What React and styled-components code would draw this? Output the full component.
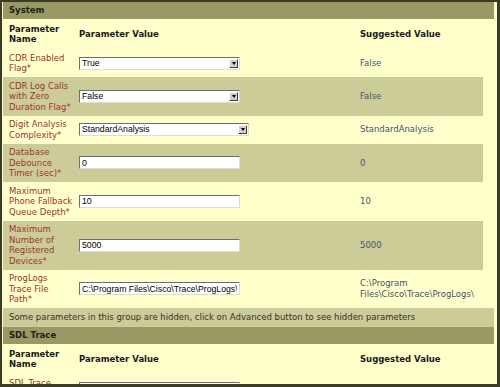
import styled, { createGlobalStyle } from 'styled-components';

const GlobalStyle = createGlobalStyle`
  html, body {
    margin: 0;
    padding: 0;
    background: #ffffcc;
  }
`;

const Frame = styled.div`
  width: 500px;
  height: 387px;
  box-sizing: border-box;
  border: solid #3b3b26;
  border-width: 2px 3px 3px 2px;
  padding: 0 3px 0 1px;
  background: #ffffcc;
  overflow: hidden;
  font-family: "DejaVu Sans", Verdana, sans-serif;
  font-size: 8.5px;
  line-height: 10.5px;
  color: #222;
`;

const SectionHeader = styled.div`
  height: 17px;
  display: flex;
  align-items: center;
  padding-left: 6px;
  background: #999966;
  font-weight: bold;
  color: #1e1e14;
`;

const ParamTable = styled.div`
  margin-right: 11px;
`;

const Row = styled.div`
  display: grid;
  grid-template-columns: 73px 281px 1fr;
  align-items: center;
  background: ${p => (p.$shade ? '#cccc99' : 'transparent')};
`;

const LabelCell = styled.div`
  padding: 3.5px 2px 3.5px 6px;
  color: #9c3434;
  white-space: nowrap;
`;

const LabelLine = styled.div``;

const Cell = styled.div`
  padding: 0 3px;
  display: flex;
  align-items: center;
`;

const HeadRow = styled(Row)`
  font-weight: bold;
  color: #1a1a1a;
  ${LabelCell} {
    color: #1a1a1a;
    padding-top: 4.5px;
    padding-bottom: 4.5px;
  }
`;

const Suggested = styled(Cell)`
  color: #44556a;
  display: block;
`;

const TextBox = styled.input`
  width: ${p => p.$w || 161}px;
  height: 13px;
  box-sizing: border-box;
  margin: 0;
  padding: 0 2px;
  border: 1px solid;
  border-color: #6e6e6e #dcdcdc #dcdcdc #6e6e6e;
  background: #fff;
  font-family: "Liberation Sans", Arial, sans-serif;
  font-size: 8.7px;
  color: #000;
  outline: none;
`;

const SelectBox = styled.div`
  width: ${p => p.$w || 161}px;
  height: 13px;
  box-sizing: border-box;
  display: flex;
  align-items: center;
  border: 1px solid;
  border-color: #6e6e6e #dcdcdc #dcdcdc #6e6e6e;
  background: #fff;
  padding: 0 1px 0 2px;
  font-family: "Liberation Sans", Arial, sans-serif;
  font-size: 8.7px;
  color: #000;
`;

const SelectValue = styled.span`
  flex: 1;
`;

const DropButton = styled.span`
  width: 9px;
  height: 9px;
  box-sizing: border-box;
  background: #d4d0c8;
  border: 1px solid;
  border-color: #fff #404040 #404040 #fff;
  display: flex;
  align-items: center;
  justify-content: center;
  &::after {
    content: '';
    border-left: 2.5px solid transparent;
    border-right: 2.5px solid transparent;
    border-top: 3px solid #000;
  }
`;

const InfoRow = styled.div`
  height: 19px;
  display: flex;
  align-items: center;
  padding-left: 6px;
  background: #cccc99;
  color: #333326;
`;

const systemParams = [
  { label: ['CDR Enabled', 'Flag*'], kind: 'select', value: 'True', suggested: 'False' },
  { label: ['CDR Log Calls', 'with Zero', 'Duration Flag*'], kind: 'select', value: 'False', suggested: 'False' },
  { label: ['Digit Analysis', 'Complexity*'], kind: 'select', value: 'StandardAnalysis', suggested: 'StandardAnalysis', width: 170 },
  { label: ['Database', 'Debounce', 'Timer (sec)*'], value: '0', suggested: '0' },
  { label: ['Maximum', 'Phone Fallback', 'Queue Depth*'], value: '10', suggested: '10' },
  { label: ['Maximum', 'Number of', 'Registered', 'Devices*'], value: '5000', suggested: '5000' },
  {
    label: ['ProgLogs', 'Trace File', 'Path*'],
    value: 'C:\\Program Files\\Cisco\\Trace\\ProgLogs\\',
    suggested: 'C:\\Program Files\\Cisco\\Trace\\ProgLogs\\',
  },
];

const sdlParams = [
  { label: ['SDL Trace', 'Flag*'], value: '0x00000111', suggested: '0x00000111' },
];

function ColumnHeads() {
  return (
    <HeadRow>
      <LabelCell>
        <LabelLine>Parameter</LabelLine>
        <LabelLine>Name</LabelLine>
      </LabelCell>
      <Cell>Parameter Value</Cell>
      <Cell>Suggested Value</Cell>
    </HeadRow>
  );
}

function ParamRow({ p, shade }) {
  return (
    <Row $shade={shade}>
      <LabelCell>
        {p.label.map(line => (
          <LabelLine key={line}>{line}</LabelLine>
        ))}
      </LabelCell>
      <Cell>
        {p.kind === 'select' ? (
          <SelectBox $w={p.width}>
            <SelectValue>{p.value}</SelectValue>
            <DropButton />
          </SelectBox>
        ) : (
          <TextBox $w={p.width} value={p.value} readOnly />
        )}
      </Cell>
      <Suggested>{p.suggested}</Suggested>
    </Row>
  );
}

function Group({ title, params, note }) {
  return (
    <>
      <SectionHeader>{title}</SectionHeader>
      <ParamTable>
        <ColumnHeads />
        {params.map((p, i) => (
          <ParamRow key={p.label.join(' ')} p={p} shade={i % 2 === 1} />
        ))}
      </ParamTable>
      {note && <InfoRow>{note}</InfoRow>}
    </>
  );
}

export default function App() {
  return (
    <Frame>
      <GlobalStyle />
      <Group
        title="System"
        params={systemParams}
        note="Some parameters in this group are hidden, click on Advanced button to see hidden parameters"
      />
      <Group title="SDL Trace" params={sdlParams} />
    </Frame>
  );
}
